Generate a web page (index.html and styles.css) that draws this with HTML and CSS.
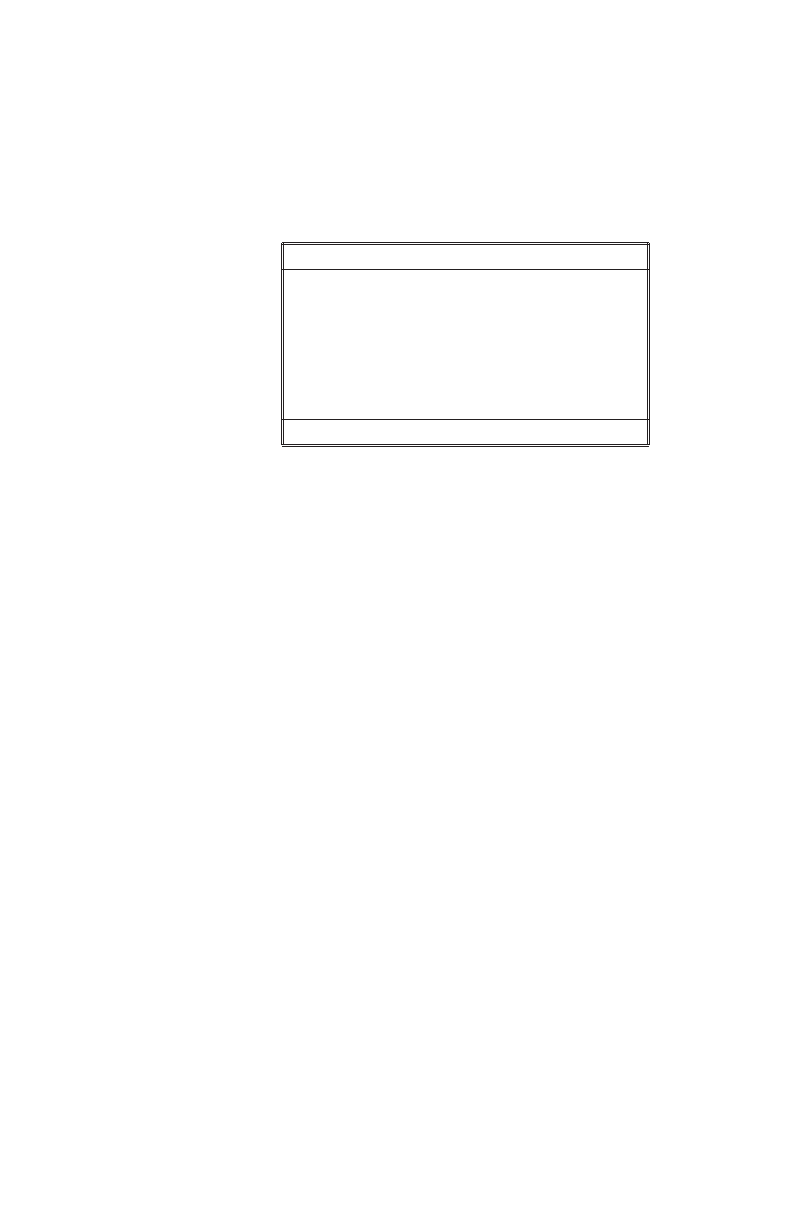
FILE: index.html
```html
<!DOCTYPE html>
<html lang="en">
<head>
<meta charset="utf-8">
<meta name="viewport" content="width=device-width, initial-scale=1">
<title>Panel</title>
<link rel="stylesheet" href="styles.css">
</head>
<body>
<main class="page">
  <section class="frame">
    <div class="rule"></div>
    <div class="panel">
      <header class="bar"></header>
      <div class="content"></div>
      <footer class="bar bar-last"></footer>
    </div>
    <div class="rule"></div>
  </section>
</main>
</body>
</html>
```

FILE: styles.css
```css
:root {
  --line: #231f20;
}

body {
  margin: 0;
  background: #fff;
  font-family: "Liberation Sans", Arial, sans-serif;
}

.page {
  display: grid;
  grid-template-columns: 281fr 369fr 142fr;
  min-height: 100vh;
  box-sizing: border-box;
  padding-top: 242px;
}

.frame {
  grid-column: 2;
}

.rule {
  height: 1px;
  margin: 0 1px;
  background: var(--line);
}

.panel {
  position: relative;
  margin-bottom: 1px;
  padding-top: 1px;
  border: solid var(--line);
  border-width: 0 1px;
}

/* Inner pair of the doubled side rules */
.panel::after {
  content: "";
  position: absolute;
  inset: 0 1px;
  border: solid var(--line);
  border-width: 0 1px;
}

.bar {
  min-height: 24px;
  border-top: 1px solid var(--line);
}

.bar-last {
  border-bottom: 1px solid var(--line);
}

.content {
  min-height: 149px;
  border-top: 1px solid var(--line);
}
```
